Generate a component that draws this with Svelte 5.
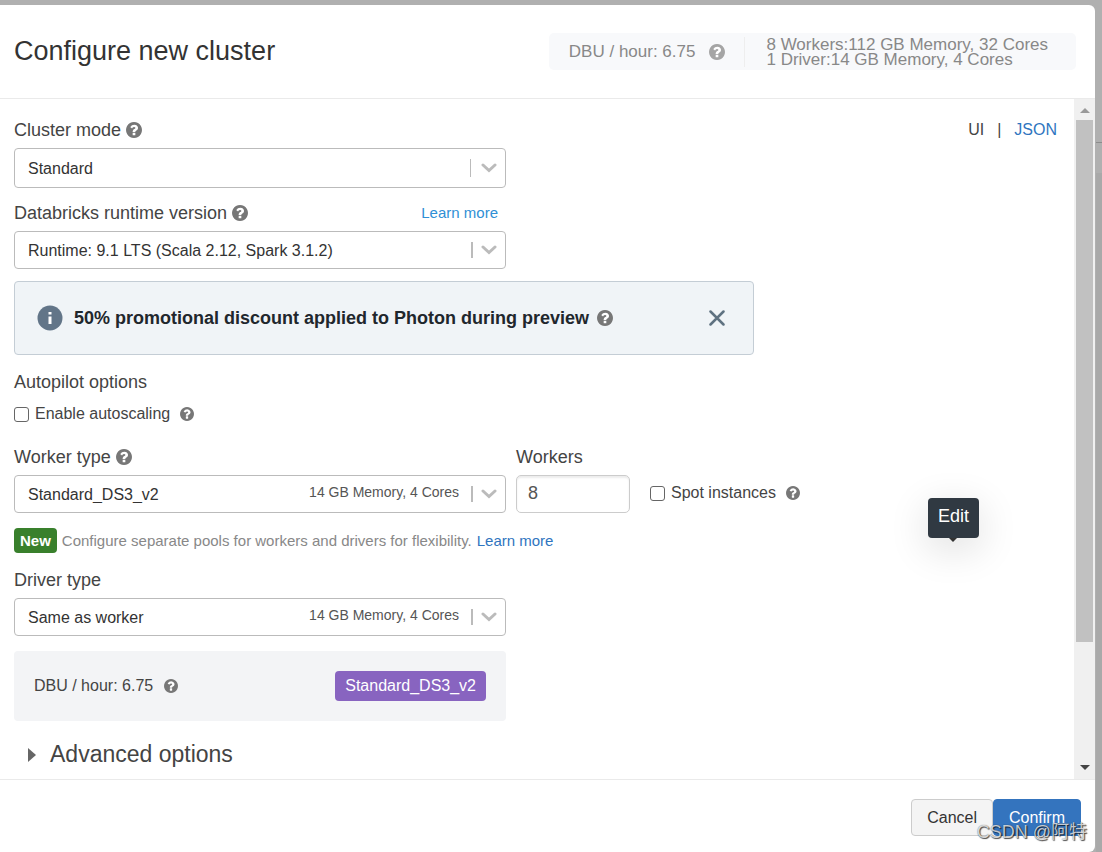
<script lang="ts">
	interface Option {
		id: string;
		value: string;
		detail?: string;
	}

	const mode: Option = { id: 'cluster-mode', value: 'Standard' };
	const runtime: Option = { id: 'runtime', value: 'Runtime: 9.1 LTS (Scala 2.12, Spark 3.1.2)' };
	const worker: Option = { id: 'worker-type', value: 'Standard_DS3_v2', detail: '14 GB Memory, 4 Cores' };
	const driver: Option = { id: 'driver-type', value: 'Same as worker', detail: '14 GB Memory, 4 Cores' };

	let workers = $state('8');
	let autoscaling = $state(false);
	let spot = $state(false);
	let showPromo = $state(true);
</script>

{#snippet help(size = 'large')}
	<svg class="help {size}" viewBox="128 128 1536 1536" aria-hidden="true">
		<path d="M896 1376v-192q0-14-9-23t-23-9h-192q-14 0-23 9t-9 23v192q0 14 9 23t23 9h192q14 0 23-9t9-23zM1152 704q0-88-55.5-163t-138.5-116-170-41q-243 0-371 213-15 24 8 42l132 100q7 6 19 6 16 0 25-12 53-68 86-92 34-24 86-24 48 0 85.5 26t37.5 59q0 38-20 61t-68 45q-63 28-115.500 86.500t-52.500 125.500v36q0 14 9 23t23 9h192q14 0 23-9t9-23q0-19 21.500-49.500t54.500-49.500q32-18 49-28.500t46-35 44.500-48 28-60.500 12.500-81z" transform="translate(128 0)" class="mark" />
		<path fill-rule="evenodd" class="disc" d="M1664 896q0 209-103 385.500t-279.500 279.500-385.500 103-385.500-103-279.500-279.500-103-385.500 103-385.500 279.500-279.500 385.500-103 385.500 103 279.500 279.500 103 385.500zM1024 1376v-192q0-14-9-23t-23-9h-192q-14 0-23 9t-9 23v192q0 14 9 23t23 9h192q14 0 23-9t9-23zM1280 704q0-88-55.500-163t-138.500-116-170-41q-243 0-371 213-15 24 8 42l132 100q7 6 19 6 16 0 25-12 53-68 86-92 34-24 86-24 48 0 85.500 26t37.500 59q0 38-20 61t-68 45q-63 28-115.500 86.500t-52.500 125.500v36q0 14 9 23t23 9h192q14 0 23-9t9-23q0-19 21.500-49.500t54.500-49.500q32-18 49-28.500t46-35 44.500-48 28-60.500 12.500-81z" />
	</svg>
{/snippet}

{#snippet picker(option: Option, tall = false)}
	<div class="picker" class:tall>
		<select id={option.id}>
			<option>{option.value}</option>
		</select>
		<div class="picker-extra">
			{#if option.detail}
				<span class="detail">{option.detail}</span>
			{/if}
			<span class="separator"></span>
			<svg class="chevron" viewBox="0 0 16 10" aria-hidden="true">
				<path d="M2 2l6 5.500 6-5.500" />
			</svg>
		</div>
	</div>
{/snippet}

<div class="page">
	<div class="modal" role="dialog" aria-labelledby="title">
		<header>
			<h1 id="title">Configure new cluster</h1>
			<div class="summary">
				<div class="rate">DBU / hour: 6.75 {@render help()}</div>
				<div class="totals">
					<div>8 Workers:112 GB Memory, 32 Cores</div>
					<div>1 Driver:14 GB Memory, 4 Cores</div>
				</div>
			</div>
		</header>

		<div class="body">
			<div class="content">
				<nav class="views">
					<span>UI</span>
					<span>|</span>
					<a href="#json">JSON</a>
				</nav>

				<div class="field">
					<div class="label-row"><label for="cluster-mode">Cluster mode</label>{@render help()}</div>
					{@render picker(mode, true)}
				</div>

				<div class="field">
					<div class="label-row">
						<label for="runtime">Databricks runtime version</label>{@render help()}
						<a class="runtime-link" href="#runtime-docs">Learn more</a>
					</div>
					{@render picker(runtime)}
				</div>

				{#if showPromo}
					<div class="promo">
						<svg class="info" viewBox="0 0 26 26" aria-hidden="true">
							<circle cx="13" cy="13" r="12.500" />
							<path d="M11.500 7h3v2.500h-3zM11.500 11.500h3v7.500h-3z" />
						</svg>
						<strong>50% promotional discount applied to Photon during preview</strong>
						{@render help()}
						<button class="close" aria-label="Dismiss" onclick={() => (showPromo = false)}>
							<svg viewBox="0 0 16 16" aria-hidden="true"><path d="M1.500 1.500l13 13M14.500 1.500l-13 13" /></svg>
						</button>
					</div>
				{/if}

				<h2>Autopilot options</h2>
				<div class="check autoscale">
					<input id="autoscaling" type="checkbox" bind:checked={autoscaling} />
					<label for="autoscaling">Enable autoscaling</label>
					{@render help('small')}
				</div>

				<div class="worker-row">
					<div class="field">
						<div class="label-row"><label for="worker-type">Worker type</label>{@render help()}</div>
						{@render picker(worker)}
					</div>
					<div class="count">
						<div class="label-row"><label for="workers">Workers</label></div>
						<input id="workers" type="text" bind:value={workers} />
					</div>
					<div class="check spot">
						<input id="spot" type="checkbox" bind:checked={spot} />
						<label for="spot">Spot instances</label>
						{@render help('small')}
					</div>
				</div>

				<p class="hint">
					<span class="new">New</span>
					<span>Configure separate pools for workers and drivers for flexibility.</span>
					<a href="#pools">Learn more</a>
				</p>

				<div class="field">
					<div class="label-row"><label for="driver-type">Driver type</label></div>
					{@render picker(driver)}
				</div>

				<div class="cost">
					<span>DBU / hour: 6.75</span>
					{@render help('small')}
					<span class="tag">Standard_DS3_v2</span>
				</div>

				<button class="advanced">
					<svg viewBox="0 0 8 14" aria-hidden="true"><path d="M0 0l8 7-8 7z" /></svg>
					Advanced options
				</button>

				<div class="tooltip" role="tooltip">Edit</div>
			</div>

			<div class="scrollbar" aria-hidden="true">
				<svg class="arrow up" viewBox="0 0 10 5"><path d="M5 0l5 5H0z" /></svg>
				<div class="track"><div class="thumb"></div></div>
				<svg class="arrow" viewBox="0 0 10 5"><path d="M0 0h10L5 5z" /></svg>
			</div>
		</div>

		<footer>
			<button class="cancel">Cancel</button>
			<button class="confirm">Confirm</button>
		</footer>
	</div>
	<div class="backdrop-edge"></div>
	<div class="watermark">CSDN @阿特</div>
</div>

<style>
	:global(body) {
		margin: 0;
		background: #b0b0b0;
	}

	.page {
		position: relative;
		box-sizing: border-box;
		display: flex;
		min-height: 100vh;
		padding-top: 5px;
		background: #b0b0b0;
		color: #444;
		font-family: 'Liberation Sans', Arial, sans-serif;
		font-size: 16px;
	}

	.backdrop-edge {
		width: 6px;
		margin-left: 1px;
		background: linear-gradient(#b0b0b0 137px, #8c8c8c 137px, #8c8c8c 138px, #b0b0b0 138px, #b0b0b0 168px, #a9a9a9 168px);
	}

	.modal {
		flex: 1;
		display: flex;
		flex-direction: column;
		background: #fff;
		border-radius: 0 6px 6px 0;
		overflow: hidden;
	}

	header {
		display: flex;
		align-items: center;
		justify-content: space-between;
		box-sizing: border-box;
		min-height: 94px;
		padding: 0 19px 0 14px;
		border-bottom: 1px solid #eaeaea;
	}

	h1 {
		margin: 0;
		color: #333;
		font-size: 27px;
		font-weight: 400;
	}

	.summary {
		display: flex;
		align-items: center;
		height: 37px;
		padding: 0 28px 0 20px;
		border-radius: 5px;
		background: #f8f9fb;
		color: #888;
		font-size: 17px;
		line-height: 15px;
	}

	.summary .help {
		margin-left: 14px;
		fill: #a5a5a5;
	}

	.rate {
		display: flex;
		align-items: center;
		height: 30px;
		padding-right: 19px;
		border-right: 1px solid #eee;
	}

	.totals {
		padding-left: 21px;
	}

	.help {
		flex: none;
		fill: #777;
	}

	.help .mark {
		fill: #fff;
	}

	.large {
		width: 16px;
		height: 16px;
	}

	.small {
		width: 14px;
		height: 14px;
	}

	a {
		color: #2f75c0;
		text-decoration: none;
	}

	.body {
		flex: 1;
		display: flex;
	}

	.content {
		position: relative;
		flex: 1;
		padding: 19px 14px 0;
	}

	.views {
		position: absolute;
		top: 21px;
		right: 17px;
		display: flex;
		gap: 13px;
		line-height: 20px;
	}

	.field {
		max-width: 492px;
		margin-bottom: 12px;
	}

	.label-row {
		display: flex;
		align-items: center;
		gap: 5px;
		margin-bottom: 6px;
		font-size: 18px;
		line-height: 24px;
	}

	.runtime-link {
		margin-left: auto;
		margin-right: 8px;
		padding-top: 1px;
		color: #2f8fd5;
		font-size: 15px;
	}

	.picker {
		display: grid;
		align-items: center;
		height: 38px;
	}

	.picker.tall {
		height: 40px;
	}

	.picker select,
	.picker-extra {
		grid-area: 1 / 1;
	}

	.picker select {
		appearance: none;
		width: 100%;
		height: 100%;
		padding: 0 60px 0 13px;
		border: 1px solid #bbb;
		border-radius: 4px;
		background: #fff;
		color: #333;
		font: inherit;
	}

	.picker-extra {
		display: flex;
		align-items: center;
		justify-self: end;
		padding-right: 9px;
		pointer-events: none;
	}

	.detail {
		margin-right: 12px;
		padding-bottom: 5px;
		color: #555;
		font-size: 14px;
	}

	.separator {
		width: 2px;
		height: 16px;
		margin-right: 8px;
		background: #bbb;
	}

	.tall .separator {
		width: 1px;
		height: 18px;
		margin-right: 10px;
	}

	.chevron {
		width: 16px;
		height: 10px;
		fill: none;
		stroke: #bbb;
		stroke-width: 3;
		stroke-linecap: round;
	}

	.promo {
		display: flex;
		align-items: center;
		box-sizing: border-box;
		max-width: 740px;
		height: 74px;
		margin-bottom: 15px;
		padding: 0 28px 0 22px;
		border: 1px solid #c4cdd5;
		border-radius: 4px;
		background: #f0f4f7;
		color: #1f272d;
		font-size: 18px;
	}

	.promo strong {
		margin: 0 8px 0 11px;
	}

	.info {
		width: 26px;
		height: 26px;
		fill: #627588;
	}

	.info path {
		fill: #fff;
	}

	.close {
		display: flex;
		margin-left: auto;
		padding: 0;
		border: 0;
		background: none;
		cursor: pointer;
	}

	.close svg {
		width: 16px;
		height: 16px;
		stroke: #5f7281;
		stroke-width: 2.500;
		stroke-linecap: round;
	}

	h2 {
		margin: 0 0 8px;
		font-size: 18px;
		font-weight: 400;
		line-height: 24px;
	}

	.check {
		display: flex;
		align-items: center;
		line-height: 24px;
	}

	.check input {
		appearance: none;
		width: 15px;
		height: 15px;
		margin: 0 6px 0 0;
		border: 1px solid #666;
		border-radius: 3px;
		background: #fff;
	}

	.check input:checked {
		background: #2f75c0;
	}

	.check .help {
		margin-left: 10px;
	}

	.autoscale {
		margin-bottom: 19px;
	}

	.worker-row {
		display: flex;
		align-items: flex-end;
		margin-bottom: 15px;
	}

	.worker-row .field {
		flex: 0 1 492px;
		margin: 0 10px 0 0;
	}

	.count {
		width: 114px;
		margin-right: 20px;
	}

	.count input {
		box-sizing: border-box;
		width: 100%;
		height: 38px;
		display: block;
		padding: 0 11px 2px;
		border: 1px solid #ccc;
		border-radius: 5px;
		box-shadow: inset 0 2px 2px rgba(0, 0, 0, 0.08);
		color: #555;
		font: inherit;
		font-size: 18px;
	}

	.spot {
		margin-bottom: 8px;
	}

	.hint {
		display: flex;
		align-items: center;
		gap: 5px;
		margin: 0 0 15px;
		color: #888;
		font-size: 15px;
		line-height: 25px;
	}

	.new {
		padding: 0 6px;
		border-radius: 4px;
		background: #39802c;
		color: #fff;
		font-weight: 700;
	}

	.cost {
		display: flex;
		align-items: center;
		box-sizing: border-box;
		max-width: 492px;
		height: 70px;
		margin-top: 15px;
		padding: 0 20px;
		border-radius: 4px;
		background: #f3f4f6;
	}

	.cost .help {
		margin-left: 11px;
	}

	.tag {
		margin-left: auto;
		padding: 0 10px;
		border-radius: 4px;
		background: #8864c0;
		color: #fff;
		line-height: 30px;
	}

	.advanced {
		display: flex;
		align-items: center;
		gap: 14px;
		padding: 20px 14px 10px;
		border: 0;
		background: none;
		color: #444;
		font: inherit;
		font-size: 23px;
	}

	.advanced svg {
		width: 8px;
		height: 14px;
		fill: #666;
	}

	.tooltip {
		position: absolute;
		top: 399px;
		right: 95px;
		padding: 0 10px 4px;
		border-radius: 4px;
		background: #303942;
		box-shadow: 0 10px 40px rgba(0, 0, 0, 0.14);
		color: #fff;
		font-size: 18px;
		line-height: 36px;
	}

	.tooltip::after {
		content: '';
		position: absolute;
		top: 100%;
		left: 50%;
		margin-left: -4px;
		border: 4px solid transparent;
		border-top-color: #333;
		border-bottom: 0;
	}

	.scrollbar {
		display: flex;
		flex-direction: column;
		align-items: center;
		width: 21px;
		background: #f0f0f0;
	}

	.arrow {
		width: 10px;
		height: 5px;
		margin: 9px 0;
		fill: #444;
	}

	.up {
		margin: 9px 0 7px;
		fill: #999;
	}

	.track {
		flex: 1;
		width: 17px;
	}

	.thumb {
		height: 82%;
		background: #c1c1c1;
	}

	footer {
		display: flex;
		justify-content: flex-end;
		padding: 19px 14px 16px;
		border-top: 1px solid #eaeaea;
	}

	footer button {
		height: 37px;
		padding: 0 15px;
		border: 1px solid #ccc;
		border-radius: 4px;
		background: #f4f4f4;
		color: #333;
		font: inherit;
	}

	footer .confirm {
		border-color: #3474be;
		background: #3474be;
		color: #fff;
	}

	.watermark {
		position: absolute;
		right: 15px;
		bottom: 6px;
		color: rgba(255, 255, 255, 0.75);
		font-family: 'Liberation Sans', 'Noto Sans CJK SC', sans-serif;
		font-size: 18px;
		line-height: 28px;
		text-shadow: 1px 1px 1px rgba(0, 0, 0, 0.7), 0 0 1px rgba(0, 0, 0, 0.6);
		pointer-events: none;
	}
</style>
